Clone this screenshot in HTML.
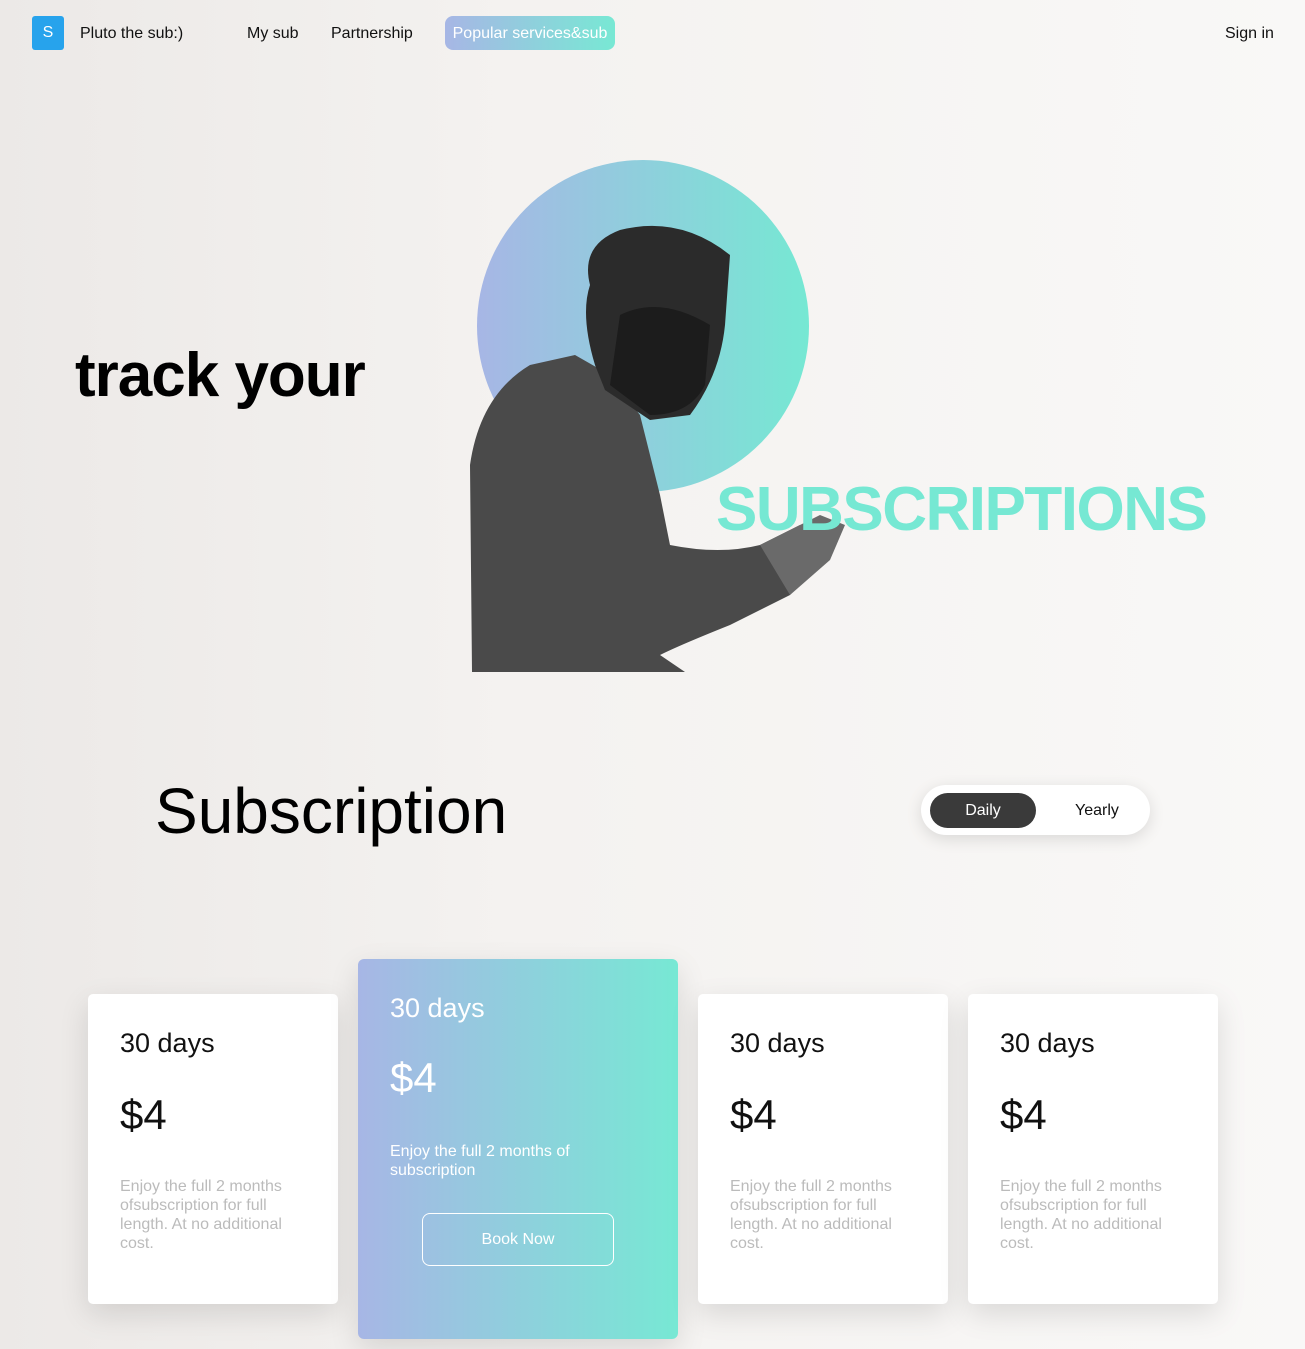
<!DOCTYPE html>
<html><head><meta charset="utf-8"><style>
*{margin:0;padding:0;box-sizing:border-box}
body{width:1305px;height:1349px;overflow:hidden;font-family:"Liberation Sans",Arial,sans-serif;background:linear-gradient(90deg,#ece9e7 0%,#f4f2f0 40%,#f9f8f7 100%);position:relative}
.a{position:absolute}
.logo{left:32px;top:16px;width:32px;height:34px;background:#27a3ec;border-radius:3px;color:#fff;font-size:16px;text-align:center;line-height:34px}
.nav{font-size:16px;color:#111;top:25px}
.pop{left:445px;top:16px;width:170px;height:34px;border-radius:8px;background:linear-gradient(90deg,#a7b6e5,#78e8d4);color:#fff;font-size:16px;line-height:35px;text-align:center}
.card{background:#fff;border-radius:5px;box-shadow:0 10px 30px rgba(0,0,0,.12);width:250px;height:310px;top:994px;padding:34px 32px}
.card .d{font-size:27px;color:#111}
.card .p{font-size:42px;color:#111;margin-top:32px}
.card .t{font-size:16px;color:#bbb;margin-top:38px;line-height:19px}
</style></head><body>
<div class="a logo">S</div>
<div class="a nav" style="left:80px">Pluto the sub:)</div>
<div class="a nav" style="left:247px">My sub</div>
<div class="a nav" style="left:331px">Partnership</div>
<div class="a pop">Popular services&amp;sub</div>
<div class="a nav" style="left:1225px">Sign in</div>

<div class="a" style="left:477px;top:160px;width:332px;height:332px;border-radius:50%;background:linear-gradient(90deg,#a7b6e5,#76e8d3)"></div>
<svg class="a" style="left:460px;top:215px" width="400" height="460">
<path d="M12 457 L10 250 Q20 180 70 150 L115 140 L150 160 L180 200 L200 280 L210 330 Q260 340 300 330 L340 310 L360 320 L330 380 L270 410 Q220 430 200 440 L225 457 Z" fill="#4a4a4a"/>
<path d="M135 150 Q120 100 130 70 Q120 30 160 15 Q220 0 270 40 L265 110 Q260 160 230 200 L190 205 L145 175 Z" fill="#2b2b2b"/>
<path d="M160 100 Q200 80 250 110 L245 170 Q230 200 190 200 L150 170Z" fill="#1c1c1c"/>
<path d="M300 330 L360 300 L385 310 L370 345 L330 380Z" fill="#6a6a6a"/>
</svg>
<div class="a" style="left:75px;top:340px;font-size:62px;color:#000;font-weight:bold;letter-spacing:-1px">track your</div>
<div class="a" style="left:716px;top:474px;font-size:62px;color:#76e8d3;font-weight:bold;letter-spacing:-1.5px">SUBSCRIPTIONS</div>

<div class="a" style="left:155px;top:774px;font-size:64px;color:#000">Subscription</div>
<div class="a" style="left:921px;top:785px;width:229px;height:50px;border-radius:25px;background:#fff;box-shadow:0 4px 16px rgba(0,0,0,.12)"></div>
<div class="a" style="left:930px;top:793px;width:106px;height:35px;border-radius:18px;background:#3a3a3a;color:#fff;font-size:16px;text-align:center;line-height:35px">Daily</div>
<div class="a" style="left:1075px;top:802px;font-size:16px;color:#111">Yearly</div>

<div class="a card" style="left:88px"><div class="d">30 days</div><div class="p">$4</div><div class="t">Enjoy the full 2 months ofsubscription for full length. At no additional cost.</div></div>
<div class="a" style="left:358px;top:959px;width:320px;height:380px;border-radius:6px;background:linear-gradient(90deg,#a7b6e5,#77e8d4);box-shadow:0 10px 30px rgba(0,0,0,.12);padding:34px 32px;color:#fff">
<div style="font-size:27px">30 days</div>
<div style="font-size:42px;margin-top:30px">$4</div>
<div style="font-size:16px;margin-top:40px;line-height:19px">Enjoy the full 2 months of<br>subscription</div>
<div style="margin:33px 0 0 32px;width:192px;height:53px;border:1px solid #fff;border-radius:8px;text-align:center;line-height:51px;font-size:16px">Book Now</div>
</div>
<div class="a card" style="left:698px"><div class="d">30 days</div><div class="p">$4</div><div class="t">Enjoy the full 2 months ofsubscription for full length. At no additional cost.</div></div>
<div class="a card" style="left:968px"><div class="d">30 days</div><div class="p">$4</div><div class="t">Enjoy the full 2 months ofsubscription for full length. At no additional cost.</div></div>
</body></html>
